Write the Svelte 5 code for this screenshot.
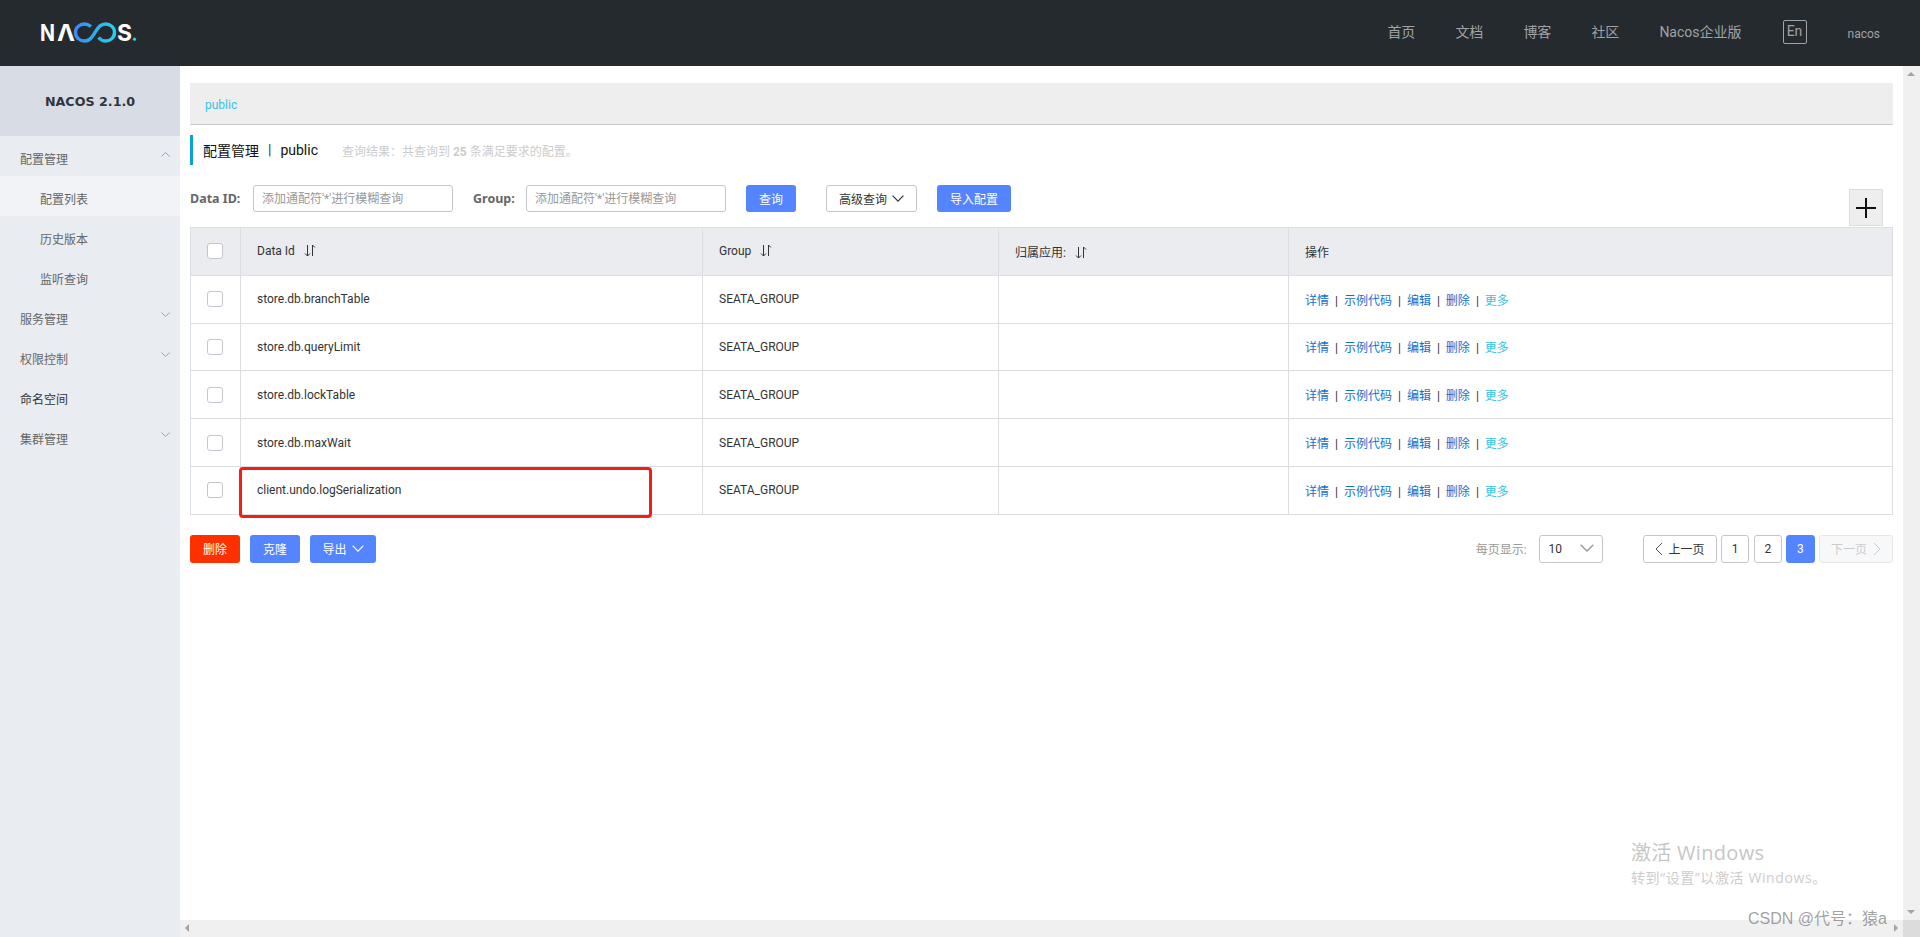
<script>
  const nav = ['首页', '文档', '博客', '社区', 'Nacos企业版'];
  const menu = [
    { t: '配置管理', arrow: 'up' },
    { t: '配置列表', sub: true, active: true },
    { t: '历史版本', sub: true },
    { t: '监听查询', sub: true },
    { t: '服务管理', arrow: 'down' },
    { t: '权限控制', arrow: 'down' },
    { t: '命名空间', dark: true },
    { t: '集群管理', arrow: 'down' }
  ];
  const rows = ['store.db.branchTable', 'store.db.queryLimit', 'store.db.lockTable', 'store.db.maxWait', 'client.undo.logSerialization'];
  const ph = "添加通配符'*'进行模糊查询";
</script>

{#snippet sortIcon()}
  <svg class="sort" width="12" height="13" viewBox="0 0 12 13" fill="none" stroke="#333" stroke-width="1">
    <path d="M3.5 1v11M1 9.5l2.5 2.5L6 9.5M8.5 12V1l2.5 2.5" />
  </svg>
{/snippet}

{#snippet chev(cls, w = 10, h = 6)}
  <svg class={cls} width={w} height={h} viewBox="0 0 10 6" fill="none" stroke="currentColor" stroke-width="1" preserveAspectRatio="none"><path d="M.5.5L5 5.2 9.5.5" /></svg>
{/snippet}

<div class="page">
  <header class="top">
    <svg class="logo" width="104" height="30" viewBox="-2 -4 104 30" role="img" aria-label="NACOS">
      <defs>
        <linearGradient id="inf" gradientUnits="userSpaceOnUse" x1="35" x2="75" y1="0" y2="0">
          <stop offset="0" stop-color="#3f87f5" />
          <stop offset="1" stop-color="#22d3ee" />
        </linearGradient>
      </defs>
      <text x="0" y="18.5" class="lg" textLength="15" lengthAdjust="spacingAndGlyphs">N</text>
      <text x="17" y="18.5" class="lg" textLength="18" lengthAdjust="spacingAndGlyphs">Λ</text>
      <path d="M51 4.500C49 3 47 2 44.500 2 39.500 2 35.500 5.500 35.500 10.500S39.500 19 44.500 19C50 19 52 15 55 10.500S60 2 65.500 2C70.500 2 74.500 5.500 74.500 10.500S70.500 19 65.500 19C62.500 19 60.500 18 58.500 15.500" fill="none" stroke="url(#inf)" stroke-width="3.400" />
      <text x="77" y="18.5" class="lg" textLength="15" lengthAdjust="spacingAndGlyphs">S</text>
      <circle cx="94.500" cy="17.200" r="1.600" fill="#22d3ee" />
    </svg>
    <nav class="links">
      {#each nav as n}<a href="#top">{n}</a>{/each}
      <span class="en">En</span>
      <span class="user">nacos</span>
    </nav>
  </header>

  <div class="body">
    <aside class="side">
      <div class="ver">NACOS 2.1.0</div>
      {#each menu as m}
        <div class="item" class:sub={m.sub} class:active={m.active} class:dark={m.dark}>
          <span class="mt">{m.t}</span>
          {#if m.arrow}
            <svg class="marrow" class:up={m.arrow === 'up'} width="9" height="5" viewBox="0 0 9 5" fill="none" stroke="#a0a5ad"><path d="M.5.500l4 4 4-4" /></svg>
          {/if}
        </div>
      {/each}
    </aside>

    <div class="mainwrap">
      <div class="mainrow">
        <main class="main">
          <div class="crumb"><span>public</span></div>
          <div class="title">
            <span class="t1">配置管理</span><span class="bar">|</span><span class="t1">public</span>
            <span class="res">查询结果：共查询到 <b>25</b> 条满足要求的配置。</span>
          </div>

          <div class="tools">
            <label class="lab" for="q1">Data ID:</label>
            <input id="q1" class="inp" placeholder={ph} />
            <label class="lab g" for="q2">Group:</label>
            <input id="q2" class="inp" placeholder={ph} />
            <button class="btn pri q">查询</button>
            <button class="btn adv">高级查询 {@render chev('c1', 12, 7)}</button>
            <button class="btn pri imp">导入配置</button>
            <div class="plus">
              <svg width="20" height="20" viewBox="0 0 20 20" stroke="#111" stroke-width="2"><path d="M0 10h20M10 0v20" /></svg>
            </div>
          </div>

          <div class="tablewrap">
            <table>
              <colgroup><col class="c-a" /><col class="c-b" /><col class="c-c" /><col class="c-d" /><col /></colgroup>
              <thead>
                <tr>
                  <th class="ck"><span class="box"></span></th>
                  <th>Data Id {@render sortIcon()}</th>
                  <th>Group {@render sortIcon()}</th>
                  <th>归属应用: {@render sortIcon()}</th>
                  <th>操作</th>
                </tr>
              </thead>
              <tbody>
                {#each rows as r}
                  <tr>
                    <td class="ck"><span class="box"></span></td>
                    <td>{r}</td>
                    <td>SEATA_GROUP</td>
                    <td></td>
                    <td class="ops">
                      <a href="#top">详情</a><i>|</i><a href="#top">示例代码</a><i>|</i><a href="#top">编辑</a><i>|</i><a href="#top">删除</a><i>|</i><a href="#top" class="more">更多</a>
                    </td>
                  </tr>
                {/each}
              </tbody>
            </table>
            <div class="mark"></div>
          </div>

          <div class="foot">
            <button class="btn red w50">删除</button>
            <button class="btn pri w50">克隆</button>
            <button class="btn pri w66">导出 {@render chev('c2', 12, 7)}</button>
            <div class="pager">
              <span class="per">每页显示:</span>
              <div class="sel"><span>10</span>{@render chev('c3', 14, 8)}</div>
              <button class="pg prev">
                <svg width="8" height="14" viewBox="0 0 8 14" fill="none" stroke="#555"><path d="M7 1L1 7l6 6" /></svg>上一页
              </button>
              <button class="pg num">1</button>
              <button class="pg num">2</button>
              <button class="pg num cur">3</button>
              <button class="pg next">下一页
                <svg width="8" height="14" viewBox="0 0 8 14" fill="none" stroke="#ccc"><path d="M1 1l6 6-6 6" /></svg>
              </button>
            </div>
          </div>
        </main>
        <div class="vbar">
          <span class="tri t-up"></span>
          <span class="tri t-down"></span>
        </div>
      </div>
      <div class="hbar">
        <span class="tri t-left"></span>
        <span class="tri t-right"></span>
        <span class="corner"></span>
      </div>
    </div>
  </div>

  <div class="win">
    <div class="w1">激活 Windows</div>
    <div class="w2">转到“设置”以激活 Windows。</div>
  </div>
  <div class="csdn">CSDN @代号：猿a</div>
</div>

<style>
  :global(body) { margin: 0; }
  .page {
    position: relative;
    width: 1920px;
    height: 937px;
    overflow: hidden;
    display: flex;
    flex-direction: column;
    font-family: Roboto, "Noto Sans CJK SC", sans-serif;
    font-size: 12px;
    color: #333;
    background: #fff;
  }
  .top {
    height: 66px;
    flex: none;
    background: #252a2f;
    display: flex;
    align-items: center;
    justify-content: space-between;
    padding: 0 40px 0 38px;
  }
  .logo { display: block; }
  .lg { font: 700 23px "Inter", "Liberation Sans", sans-serif; fill: #fff; }
  .links { display: flex; align-items: center; color: #a9abad; }
  .links a { color: #a0a3a6; text-decoration: none; font-size: 14px; margin-right: 40px; line-height: 20px; margin-top: -3px; }
  .links a:last-of-type { margin-right: 41px; }
  .en {
    box-sizing: border-box;
    width: 24px;
    height: 24px;
    border: 1px solid #a0a3a6;
    border-radius: 2px;
    font-size: 14px;
    line-height: 20px;
    text-align: center;
    color: #a0a3a6;
    margin-right: 41px;
    margin-top: -3px;
  }
  .user { font-size: 12px; color: #a0a3a6; margin-top: 2px; }

  .body { flex: 1; display: flex; min-height: 0; }
  .side { width: 180px; flex: none; background: #e9ecf1; color: #666; }
  .ver {
    height: 70px;
    background: #d8dde5;
    display: flex;
    align-items: center;
    justify-content: center;
    font: 700 12.7px "DejaVu Sans", "Noto Sans", sans-serif;
    color: #2f3540;
  }
  .item {
    height: 40px;
    display: flex;
    align-items: center;
    justify-content: space-between;
    padding: 0 10px 0 20px;
  }
  .mt { padding-top: 4px; }
  .item.sub { padding-left: 40px; }
  .item.active { background: #f2f3f7; }
  .item.dark { color: #333; }
  .marrow { margin-top: -4px; }
  .marrow.up { transform: rotate(180deg); }

  .mainwrap { flex: 1; display: flex; flex-direction: column; min-width: 0; }
  .mainrow { flex: 1; display: flex; min-height: 0; }
  .main { flex: 1; padding: 17px 10px 0; min-width: 0; }
  .crumb {
    box-sizing: border-box;
    height: 42px;
    background: #eee;
    border-bottom: 1px solid #ccc;
    padding: 13px 15px 0;
    color: #33c4e5;
    line-height: 18px;
  }
  .title {
    margin-top: 10px;
    height: 30px;
    border-left: 3px solid #09a1d8;
    padding-left: 10px;
    display: flex;
    align-items: center;
  }
  .t1 { font-size: 14px; color: #111; }
  .bar { font-size: 14px; margin: 0 9px; color: #333; }
  .res { margin-left: 24px; color: #ccc; }
  .tools {
    position: relative;
    margin-top: 20px;
    height: 27px;
    display: flex;
    align-items: center;
  }
  .lab { width: 63px; font: 700 12.5px "Noto Sans", sans-serif; color: #666; }
  .lab.g { width: 53px; margin-left: 20px; }
  .inp {
    box-sizing: border-box;
    width: 200px;
    height: 27px;
    border: 1px solid #c4c6cf;
    border-radius: 3px;
    padding: 0 8px;
    font: 12px Roboto, "Noto Sans CJK SC", sans-serif;
    outline: none;
  }
  .inp::placeholder { color: #999; opacity: 1; }
  .btn {
    box-sizing: border-box;
    height: 27px;
    border: 1px solid transparent;
    border-radius: 3px;
    padding: 0;
    font: 12px Roboto, "Noto Sans CJK SC", sans-serif;
    display: inline-flex;
    align-items: center;
    justify-content: center;
    gap: 5px;
  }
  .pri { background: #5584ff; color: #fff; }
  .red { background: #ff3000; color: #fff; }
  .q { width: 50px; margin-left: 20px; }
  .adv { width: 91px; margin-left: 30px; background: #fff; border-color: #c4c6cf; color: #333; }
  .imp { width: 74px; margin-left: 20px; }
  .plus {
    position: absolute;
    right: 10px;
    top: 4px;
    box-sizing: border-box;
    width: 34px;
    height: 37px;
    background: #eee;
    border: 1px solid #ddd;
    display: flex;
    align-items: center;
    justify-content: center;
  }
  .tablewrap { position: relative; margin-top: 15px; }
  table {
    width: 100%;
    table-layout: fixed;
    border-collapse: collapse;
    border: 1px solid #dcdee3;
  }
  .c-a { width: 50px; }
  .c-b { width: 462px; }
  .c-c { width: 296px; }
  .c-d { width: 290px; }
  th, td {
    box-sizing: border-box;
    height: 47.8px;
    padding: 0 16px;
    border: 1px solid #dcdee3;
    font-size: 12px;
    font-weight: 400;
    text-align: left;
    color: #333;
  }
  th { background: #ebecf0; }
  .ck { padding: 0 0 0 16px; }
  .box {
    display: block;
    box-sizing: border-box;
    width: 16px;
    height: 16px;
    background: #fff;
    border: 1px solid #c4c6cf;
    border-radius: 3px;
  }
  .sort { vertical-align: -2px; margin-left: 6px; }
  .ops a { color: #1170cf; text-decoration: none; }
  .ops a.more { color: #33c4e5; }
  .ops i { font-style: normal; margin: 0 6px; color: #333; }
  .mark {
    position: absolute;
    left: 49px;
    top: 240px;
    width: 413px;
    height: 51px;
    box-sizing: border-box;
    border: 3px solid #f41f14;
    border-radius: 4px;
  }
  .foot { margin-top: 20px; display: flex; align-items: center; gap: 10px; height: 28px; }
  .foot .btn { height: 28px; }
  .w50 { width: 50px; }
  .w66 { width: 66px; }
  .pager { margin-left: auto; display: flex; align-items: center; }
  .per { color: #999; margin-right: 12px; }
  .sel {
    box-sizing: border-box;
    width: 64px;
    height: 28px;
    border: 1px solid #c4c6cf;
    border-radius: 3px;
    padding: 0 8px 0 9px;
    display: flex;
    align-items: center;
    justify-content: space-between;
    color: #333;
    margin-right: 40px;
  }
  .c3 { color: #999; margin-top: -2px; }
  .pg {
    box-sizing: border-box;
    height: 28px;
    background: #fff;
    border: 1px solid #c4c6cf;
    border-radius: 3px;
    font: 12px Roboto, "Noto Sans CJK SC", sans-serif;
    color: #333;
    padding: 0;
    display: flex;
    align-items: center;
    justify-content: center;
  }
  .prev { width: 74px; gap: 6px; }
  .num { width: 28.3px; margin-left: 4.4px; }
  .cur { background: #5584ff; border-color: #5584ff; color: #fff; }
  .next { width: 74px; margin-left: 4.4px; gap: 6px; background: #f7f8fa; border-color: #e6e7eb; color: #ccc; }

  .vbar { width: 17px; flex: none; background: #f0f0f0; position: relative; }
  .hbar { height: 17px; flex: none; background: #f0f0f0; position: relative; }
  .corner { position: absolute; right: 0; top: 0; width: 17px; height: 17px; background: #dcdcdc; }
  .tri { position: absolute; width: 0; height: 0; border-style: solid; border-color: transparent; }
  .t-up { left: 4px; top: 6px; border-width: 0 4px 4px; border-bottom-color: #a3a3a3; }
  .t-down { left: 4px; bottom: 6px; border-width: 4px 4px 0; border-top-color: #a3a3a3; }
  .t-left { left: 5px; top: 4px; border-width: 4px 4px 4px 0; border-right-color: #a3a3a3; }
  .t-right { right: 22px; top: 4px; border-width: 4px 0 4px 4px; border-left-color: #a3a3a3; }

  .win { position: absolute; left: 1631px; top: 839px; font-family: "Open Sans", "Noto Sans CJK SC", sans-serif; color: #c6c6c6; }
  .w1 { font-size: 20px; line-height: 28px; letter-spacing: .3px; }
  .w2 { font-size: 14px; line-height: 20px; margin-top: 1px; color: #cdcdcd; letter-spacing: .6px; }
  .csdn {
    position: absolute;
    left: 1748px;
    top: 908px;
    font: 16px/22px "Liberation Sans", "Noto Sans CJK SC", sans-serif;
    color: rgba(120, 120, 120, 0.7);
    white-space: nowrap;
  }
</style>
